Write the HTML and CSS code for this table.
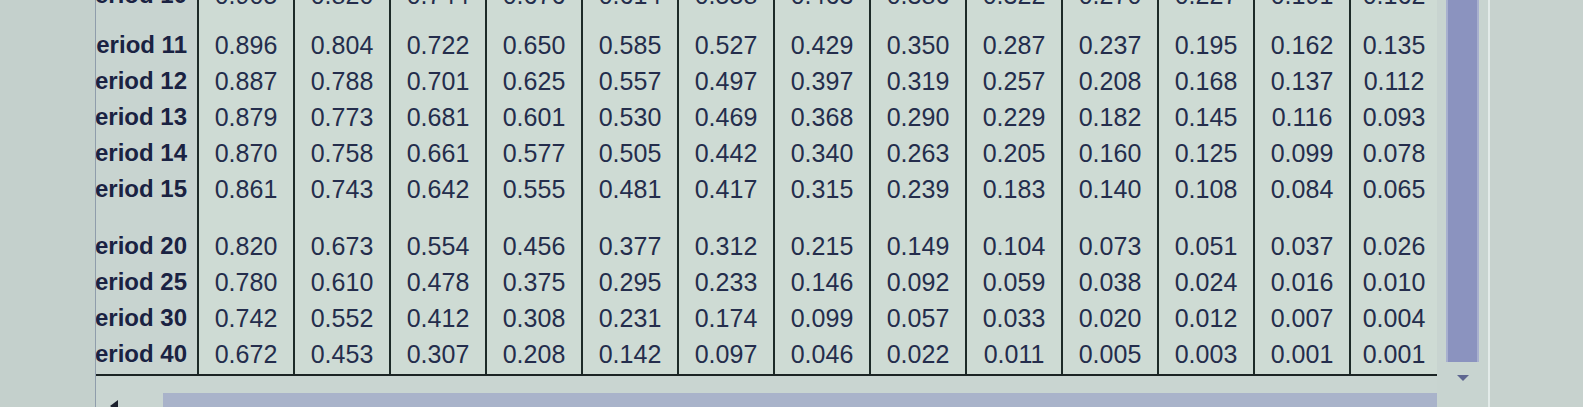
FILE: index.html
```html
<!DOCTYPE html>
<html>
<head>
<meta charset="utf-8">
<link rel="stylesheet" href="styles.css">
</head>
<body>
<div class="screen">
  <div class="gutter"></div>
  <div class="panel">
    <div class="sheet">
      <div class="row first"><div class="label">Period 10</div><div class="cell">0.905</div><div class="cell">0.820</div><div class="cell">0.744</div><div class="cell">0.676</div><div class="cell">0.614</div><div class="cell">0.558</div><div class="cell">0.463</div><div class="cell">0.386</div><div class="cell">0.322</div><div class="cell">0.270</div><div class="cell">0.227</div><div class="cell">0.191</div><div class="cell">0.162</div></div>
      <div class="row"><div class="label">Period 11</div><div class="cell">0.896</div><div class="cell">0.804</div><div class="cell">0.722</div><div class="cell">0.650</div><div class="cell">0.585</div><div class="cell">0.527</div><div class="cell">0.429</div><div class="cell">0.350</div><div class="cell">0.287</div><div class="cell">0.237</div><div class="cell">0.195</div><div class="cell">0.162</div><div class="cell">0.135</div></div>
      <div class="row"><div class="label">Period 12</div><div class="cell">0.887</div><div class="cell">0.788</div><div class="cell">0.701</div><div class="cell">0.625</div><div class="cell">0.557</div><div class="cell">0.497</div><div class="cell">0.397</div><div class="cell">0.319</div><div class="cell">0.257</div><div class="cell">0.208</div><div class="cell">0.168</div><div class="cell">0.137</div><div class="cell">0.112</div></div>
      <div class="row"><div class="label">Period 13</div><div class="cell">0.879</div><div class="cell">0.773</div><div class="cell">0.681</div><div class="cell">0.601</div><div class="cell">0.530</div><div class="cell">0.469</div><div class="cell">0.368</div><div class="cell">0.290</div><div class="cell">0.229</div><div class="cell">0.182</div><div class="cell">0.145</div><div class="cell">0.116</div><div class="cell">0.093</div></div>
      <div class="row"><div class="label">Period 14</div><div class="cell">0.870</div><div class="cell">0.758</div><div class="cell">0.661</div><div class="cell">0.577</div><div class="cell">0.505</div><div class="cell">0.442</div><div class="cell">0.340</div><div class="cell">0.263</div><div class="cell">0.205</div><div class="cell">0.160</div><div class="cell">0.125</div><div class="cell">0.099</div><div class="cell">0.078</div></div>
      <div class="row"><div class="label">Period 15</div><div class="cell">0.861</div><div class="cell">0.743</div><div class="cell">0.642</div><div class="cell">0.555</div><div class="cell">0.481</div><div class="cell">0.417</div><div class="cell">0.315</div><div class="cell">0.239</div><div class="cell">0.183</div><div class="cell">0.140</div><div class="cell">0.108</div><div class="cell">0.084</div><div class="cell">0.065</div></div>
      <div class="row spacer"><div class="label"></div><div class="cell"></div><div class="cell"></div><div class="cell"></div><div class="cell"></div><div class="cell"></div><div class="cell"></div><div class="cell"></div><div class="cell"></div><div class="cell"></div><div class="cell"></div><div class="cell"></div><div class="cell"></div><div class="cell"></div></div>
      <div class="row"><div class="label">Period 20</div><div class="cell">0.820</div><div class="cell">0.673</div><div class="cell">0.554</div><div class="cell">0.456</div><div class="cell">0.377</div><div class="cell">0.312</div><div class="cell">0.215</div><div class="cell">0.149</div><div class="cell">0.104</div><div class="cell">0.073</div><div class="cell">0.051</div><div class="cell">0.037</div><div class="cell">0.026</div></div>
      <div class="row"><div class="label">Period 25</div><div class="cell">0.780</div><div class="cell">0.610</div><div class="cell">0.478</div><div class="cell">0.375</div><div class="cell">0.295</div><div class="cell">0.233</div><div class="cell">0.146</div><div class="cell">0.092</div><div class="cell">0.059</div><div class="cell">0.038</div><div class="cell">0.024</div><div class="cell">0.016</div><div class="cell">0.010</div></div>
      <div class="row"><div class="label">Period 30</div><div class="cell">0.742</div><div class="cell">0.552</div><div class="cell">0.412</div><div class="cell">0.308</div><div class="cell">0.231</div><div class="cell">0.174</div><div class="cell">0.099</div><div class="cell">0.057</div><div class="cell">0.033</div><div class="cell">0.020</div><div class="cell">0.012</div><div class="cell">0.007</div><div class="cell">0.004</div></div>
      <div class="row last"><div class="label">Period 40</div><div class="cell">0.672</div><div class="cell">0.453</div><div class="cell">0.307</div><div class="cell">0.208</div><div class="cell">0.142</div><div class="cell">0.097</div><div class="cell">0.046</div><div class="cell">0.022</div><div class="cell">0.011</div><div class="cell">0.005</div><div class="cell">0.003</div><div class="cell">0.001</div><div class="cell">0.001</div></div>
    </div>
    <div class="hscroll">
      <span class="arrow-left"></span>
      <div class="hthumb"></div>
    </div>
  </div>
  <div class="vscroll">
    <div class="vthumb"></div>
    <span class="arrow-down"></span>
  </div>
  <div class="rest"></div>
</div>
</body>
</html>
```

FILE: styles.css
```css
* { box-sizing: border-box; }
html, body {
  margin: 0;
  padding: 0;
  background: #c6d2ce;
  font-family: "Liberation Sans", Arial, sans-serif;
}
.screen {
  display: flex;
  width: 1583px;
  height: 407px;
  overflow: hidden;
}
.gutter {
  width: 95px;
  flex: none;
  background: #c4d0cc;
}
.panel {
  width: 1342px;
  flex: none;
  display: flex;
  flex-direction: column;
  border-left: 1px solid #8f9dab;
  background: #c9d5d1;
}
.sheet {
  margin-top: -23px;
  border-bottom: 2px solid #1b2424;
}
.row {
  display: grid;
  grid-template-columns: 101px repeat(12, 96px) 88px;
  height: 36px;
}
.row.first { height: 50px; }
.row.spacer { height: 21px; }
.row.last { height: 38px; }
.label {
  display: flex;
  justify-content: flex-end;
  overflow: hidden;
  white-space: nowrap;
  padding-right: 10px;
  font-weight: bold;
  font-size: 24px;
  line-height: 36px;
  color: #1a2242;
  background: #c8d4d0;
}
.cell {
  border-left: 2px solid #1d2a28;
  text-align: center;
  font-size: 25px;
  line-height: 36px;
  color: #242d4c;
  background: #cedbd4;
  white-space: nowrap;
}
.hscroll {
  position: relative;
  flex: 1;
  padding: 17px 0 0 67px;
}
.hthumb {
  height: 20px;
  background: #a9b3ca;
}
.arrow-left {
  position: absolute;
  left: 14px;
  top: 24px;
  width: 0;
  height: 0;
  border-top: 6px solid transparent;
  border-bottom: 6px solid transparent;
  border-right: 8px solid #1a1f2c;
}
.vscroll {
  width: 53px;
  flex: none;
  display: flex;
  flex-direction: column;
  align-items: flex-start;
  padding-left: 9px;
  border-right: 2px solid #e3ebe9;
  background: #c8d4d0;
}
.vthumb {
  width: 33px;
  height: 362px;
  background: #8b93bf;
  border-left: 2px solid #a8b0cf;
  border-right: 2px solid #a8b0cf;
}
.arrow-down {
  margin: 13px 0 0 11px;
  width: 0;
  height: 0;
  border-left: 6px solid transparent;
  border-right: 6px solid transparent;
  border-top: 6px solid #5e6690;
}
.rest {
  flex: 1;
  background: #c7d2ce;
}
```
